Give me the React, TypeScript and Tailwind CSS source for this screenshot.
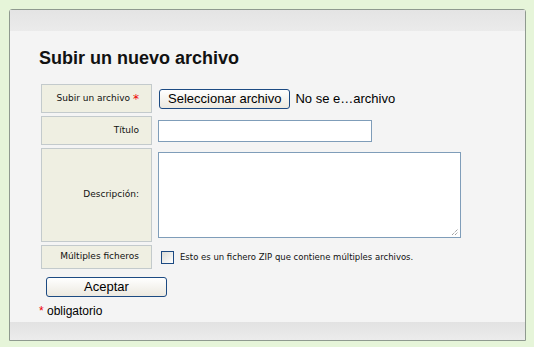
import React from "react";

const lbl = "flex items-center justify-end pr-[12px] bg-[#efefe2] border border-[#c3cacc] text-[9px] text-[#111] font-['DejaVu_Sans',sans-serif]";

export default function App() {
  return (
    <div className="w-[534px] h-[347px] bg-[#e6f5d9] pt-[9px] pl-[9px] font-['Liberation_Sans',Arial,sans-serif]">
      <div className="w-[517px] h-[332px] border border-[#8f9a8f] rounded-tl-[3px] rounded-tr-[3px] bg-[#f4f4f4] flex flex-col">
        <div className="h-[21px] bg-gradient-to-b from-[#e4e4e4] to-[#ebebeb]" />
        <div className="flex-1 pl-[29px] pt-[17px]">
          <h1 className="text-[18px] leading-[20px] font-bold text-[#111]">Subir un nuevo archivo</h1>
          <div className="mt-[16px] ml-[2px] grid grid-cols-[111px_1fr] grid-rows-[29px_29px_94px_24px] gap-y-[3px] gap-x-[6px]">
            <div className={lbl}>
              Subir un archivo <span className="text-[#e00] text-[12px] ml-[3px] leading-none">*</span>
            </div>
            <div className="flex items-center">
              <button className="h-[20px] px-[8px] ml-[1px] border border-[#1c4a82] rounded-[3px] bg-gradient-to-b from-[#ffffff] to-[#ece9e0] text-[13px] leading-[16px] text-black">
                Seleccionar archivo
              </button>
              <span className="ml-[5px] text-[13px] text-black">No se e…archivo</span>
            </div>
            <div className={lbl}>Título</div>
            <div className="flex items-center">
              <div className="w-[214px] h-[22px] bg-white border border-[#7f9db9]" />
            </div>
            <div className={lbl}>Descripción:</div>
            <div className="flex items-center">
              <div className="relative w-[303px] h-[86px] bg-white border border-[#7f9db9]">
                <svg className="absolute right-[1px] bottom-[1px]" width="8" height="8" viewBox="0 0 8 8">
                  <line x1="1" y1="7" x2="7" y2="1" stroke="#555" strokeWidth="0.8" strokeDasharray="1 1" />
                  <line x1="4" y1="7" x2="7" y2="4" stroke="#555" strokeWidth="0.8" strokeDasharray="1 1" />
                </svg>
              </div>
            </div>
            <div className={lbl}>Múltiples ficheros</div>
            <div className="flex items-center">
              <div className="ml-[3px] w-[13px] h-[13px] border border-[#1c4a82] bg-gradient-to-br from-[#dcdcd6] to-[#ffffff]" />
              <span className="ml-[6px] text-[8.5px] text-[#111] font-['DejaVu_Sans',sans-serif]">
                Esto es un fichero ZIP que contiene múltiples archivos.
              </span>
            </div>
          </div>
          <button className="mt-[8px] ml-[7px] w-[121px] h-[20px] border border-[#1c4a82] rounded-[3px] bg-gradient-to-b from-[#ffffff] to-[#ece9e0] text-[13px] leading-[16px] text-black">
            Aceptar
          </button>
          <div className="mt-[6px] text-[12px] leading-[14px] text-black">
            <span className="text-[#e00]">*</span> obligatorio
          </div>
        </div>
        <div className="h-[18px] bg-gradient-to-b from-[#e2e2e2] to-[#ececec]" />
      </div>
    </div>
  );
}
